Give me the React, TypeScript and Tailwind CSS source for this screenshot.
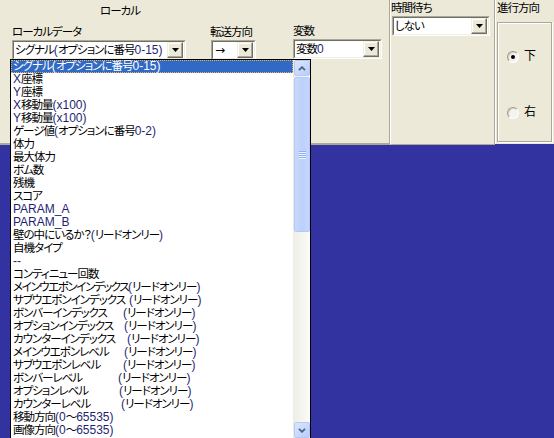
import React from 'react';

const font = "font-['Liberation_Sans','Noto_Sans_CJK_JP',sans-serif] [font-feature-settings:'palt'] text-[11.5px] leading-[13px] tracking-[-1px]";

const plainItems = [
  'シグナル(オプションに番号0-15)',
  'X座標',
  'Y座標',
  'X移動量(x100)',
  'Y移動量(x100)',
  'ゲージ値(オプションに番号0-2)',
  '体力',
  '最大体力',
  'ボム数',
  '残機',
  'スコア',
  'PARAM_A',
  'PARAM_B',
  '壁の中にいるか？(リードオンリー)',
  '自機タイプ',
  '--',
  'コンティニュー回数',
];

// name column width sets where "(リードオンリー)" starts
const readOnly: { name: string; w: number; tight?: boolean }[] = [
  { name: 'メインウエポンインデックス', w: 115, tight: true },
  { name: 'サブウエポンインデックス', w: 116 },
  { name: 'ボンバーインデックス', w: 110 },
  { name: 'オプションインデックス', w: 111 },
  { name: 'カウンターインデックス', w: 114 },
  { name: 'メインウエポンレベル', w: 111 },
  { name: 'サブウエポンレベル', w: 110 },
  { name: 'ボンバーレベル', w: 105 },
  { name: 'オプションレベル', w: 106 },
  { name: 'カウンターレベル', w: 108 },
];

const tailItems = ['移動方向(0～65535)', '画像方向(0～65535)'];

function Mixed({ text, selected }: { text: string; selected?: boolean }) {
  const parts = text.split(/([\x20-\x7e]+)/);
  return (
    <>
      {parts.map((p, i) =>
        i % 2 === 1 ? (
          <span key={i} className={`text-[12px] tracking-[0px] ${selected ? 'text-white' : 'text-[#1f1f72]'}`}>
            {p}
          </span>
        ) : (
          <span key={i}>{p}</span>
        )
      )}
    </>
  );
}

function DropButton() {
  return (
    <div className="flex h-[16px] w-[16px] shrink-0 items-center justify-center border border-t-[#f1efe2] border-l-[#f1efe2] border-b-[#716f64] border-r-[#716f64] bg-[#ece9d8] shadow-[inset_-1px_-1px_0_#aca899,inset_1px_1px_0_#ffffff]">
      <svg width="7" height="4" viewBox="0 0 7 4">
        <polygon points="0,0 7,0 3.5,4" fill="#000" />
      </svg>
    </div>
  );
}

function Select({ value, width, arrow }: { value: string; width: string; arrow?: boolean }) {
  return (
    <div className={`${width} h-[20px] border border-t-[#aca899] border-l-[#aca899] border-b-white border-r-white`}>
      <div className="flex h-full items-center border border-t-[#716f64] border-l-[#716f64] border-b-[#f1efe2] border-r-[#f1efe2] bg-white pr-[1px]">
        <span className="flex-1 overflow-hidden whitespace-nowrap pl-[1px]">
          {arrow ? (
            <span className="pl-[1px] font-['DejaVu_Sans',sans-serif] text-[12px] tracking-[0px]">{value}</span>
          ) : (
            <Mixed text={value} />
          )}
        </span>
        <DropButton />
      </div>
    </div>
  );
}

function Radio({ checked, label }: { checked?: boolean; label: string }) {
  return (
    <div className="flex items-center gap-[5px] pl-[9px]">
      <div className="flex h-[12px] w-[12px] items-center justify-center rounded-full border border-t-[#9d9a8c] border-l-[#9d9a8c] border-b-white border-r-white bg-[#f4f3ee] shadow-[inset_1px_1px_0_#d4d0c8]">
        {checked && <div className="h-[4px] w-[4px] rounded-full bg-black" />}
      </div>
      <span className="text-[12px]">{label}</span>
    </div>
  );
}

function ScrollArrow({ up }: { up?: boolean }) {
  return (
    <div className="flex h-[16px] w-[16px] items-center justify-center rounded-[2px] border border-[#b6c9f5] bg-gradient-to-br from-[#dce6fd] to-[#b8cdfa]">
      <svg width="8" height="5" viewBox="0 0 8 5">
        <path d={up ? 'M1 4.2 L4 1.2 L7 4.2' : 'M1 0.8 L4 3.8 L7 0.8'} stroke="#4d6185" strokeWidth="1.8" fill="none" />
      </svg>
    </div>
  );
}

function Scrollbar() {
  return (
    <div className="flex h-full w-[17px] flex-col bg-gradient-to-r from-[#eeede5] to-[#fbfbf8] pl-[1px]">
      <ScrollArrow up />
      <div className="mt-[1px] flex h-[155px] w-[16px] items-center justify-center rounded-[2px] border border-[#b4c8f6] bg-gradient-to-r from-[#c9d8fc] via-[#bdd0fb] to-[#c6d6fc]">
        <div className="flex flex-col gap-[1px]">
          <div className="h-[1px] w-[7px] bg-[#8cb0f8] shadow-[0_1px_0_#eef4fe]" />
          <div className="h-[1px] w-[7px] bg-[#8cb0f8] shadow-[0_1px_0_#eef4fe]" />
          <div className="h-[1px] w-[7px] bg-[#8cb0f8] shadow-[0_1px_0_#eef4fe]" />
          <div className="h-[1px] w-[7px] bg-[#8cb0f8] shadow-[0_1px_0_#eef4fe]" />
        </div>
      </div>
      <div className="flex-1" />
      <ScrollArrow />
    </div>
  );
}

function DropList() {
  return (
    <div className="absolute left-[10px] top-[59px] flex h-[380px] w-[301px] border border-black bg-white">
      <div className="flex-1 overflow-hidden">
        {plainItems.map((t, i) =>
          i === 0 ? (
            <div
              key={i}
              className="h-[13px] whitespace-nowrap border border-dotted border-[#e3b56a] bg-[#316ac5] pl-[1px] leading-[11px] text-white"
            >
              <Mixed text={t} selected />
            </div>
          ) : (
            <div key={i} className="h-[13px] whitespace-nowrap pl-[2px]">
              <Mixed text={t} />
            </div>
          )
        )}
        {readOnly.map((r) => (
          <div key={r.name} className="flex h-[13px] whitespace-nowrap pl-[2px]">
            <span style={{ width: r.w }} className={`shrink-0 ${r.tight ? 'tracking-[-1.4px]' : ''}`}>
              {r.name}
            </span>
            <span>
              <Mixed text="(リードオンリー)" />
            </span>
          </div>
        ))}
        {tailItems.map((t) => (
          <div key={t} className="h-[13px] whitespace-nowrap pl-[2px]">
            <Mixed text={t} />
          </div>
        ))}
      </div>
      <Scrollbar />
    </div>
  );
}

export default function App() {
  return (
    <div className={`relative h-[438px] w-[554px] overflow-hidden bg-[#3232a0] text-black ${font}`}>
      <div className="flex items-start whitespace-nowrap">
        {/* ローカル */}
        <section className="h-[145px] w-[390px] border-b-2 border-r border-b-[#aca899] border-r-[#aca899] bg-[#ece9d8]">
          <div className="pl-[100px] pt-[5px]">ローカル</div>
          <div className="mt-[8px] flex pl-[12px]">
            <div className="w-[174px]">
              <div className="h-[14px]">ローカルデータ</div>
              <Select value="シグナル(オプションに番号0-15)" width="w-[174px]" />
            </div>
            <div className="ml-[25px] w-[45px]">
              <div className="-ml-[1px] h-[14px]">転送方向</div>
              <Select value="→" width="w-[45px]" arrow />
            </div>
            <div className="ml-[37px] -mt-[1px] w-[89px]">
              <div className="h-[14px]">変数</div>
              <Select value="変数0" width="w-[89px]" />
            </div>
          </div>
        </section>

        {/* 時間待ち */}
        <section className="h-[145px] w-[105px] border-b border-l border-r border-b-[#aca899] border-l-white border-r-[#aca899] bg-[#ece9d8]">
          <div className="pt-[2px]">時間待ち</div>
          <div className="mt-[1px] pl-[1px]">
            <Select value="しない" width="w-[98px]" />
          </div>
        </section>

        {/* 進行方向 */}
        <section className="h-[144px] w-[59px] border-l border-l-white bg-[#ece9d8] pl-[1px]">
          <div className="pt-[2px]">進行方向</div>
          <div className="mt-[7px] h-[120px] w-[55px] border border-[#aca899] shadow-[inset_1px_1px_0_#ffffff,1px_1px_0_#ffffff]">
            <div className="pt-[27px]">
              <Radio checked label="下" />
            </div>
            <div className="pt-[43px]">
              <Radio label="右" />
            </div>
          </div>
        </section>
      </div>

      <DropList />
    </div>
  );
}
